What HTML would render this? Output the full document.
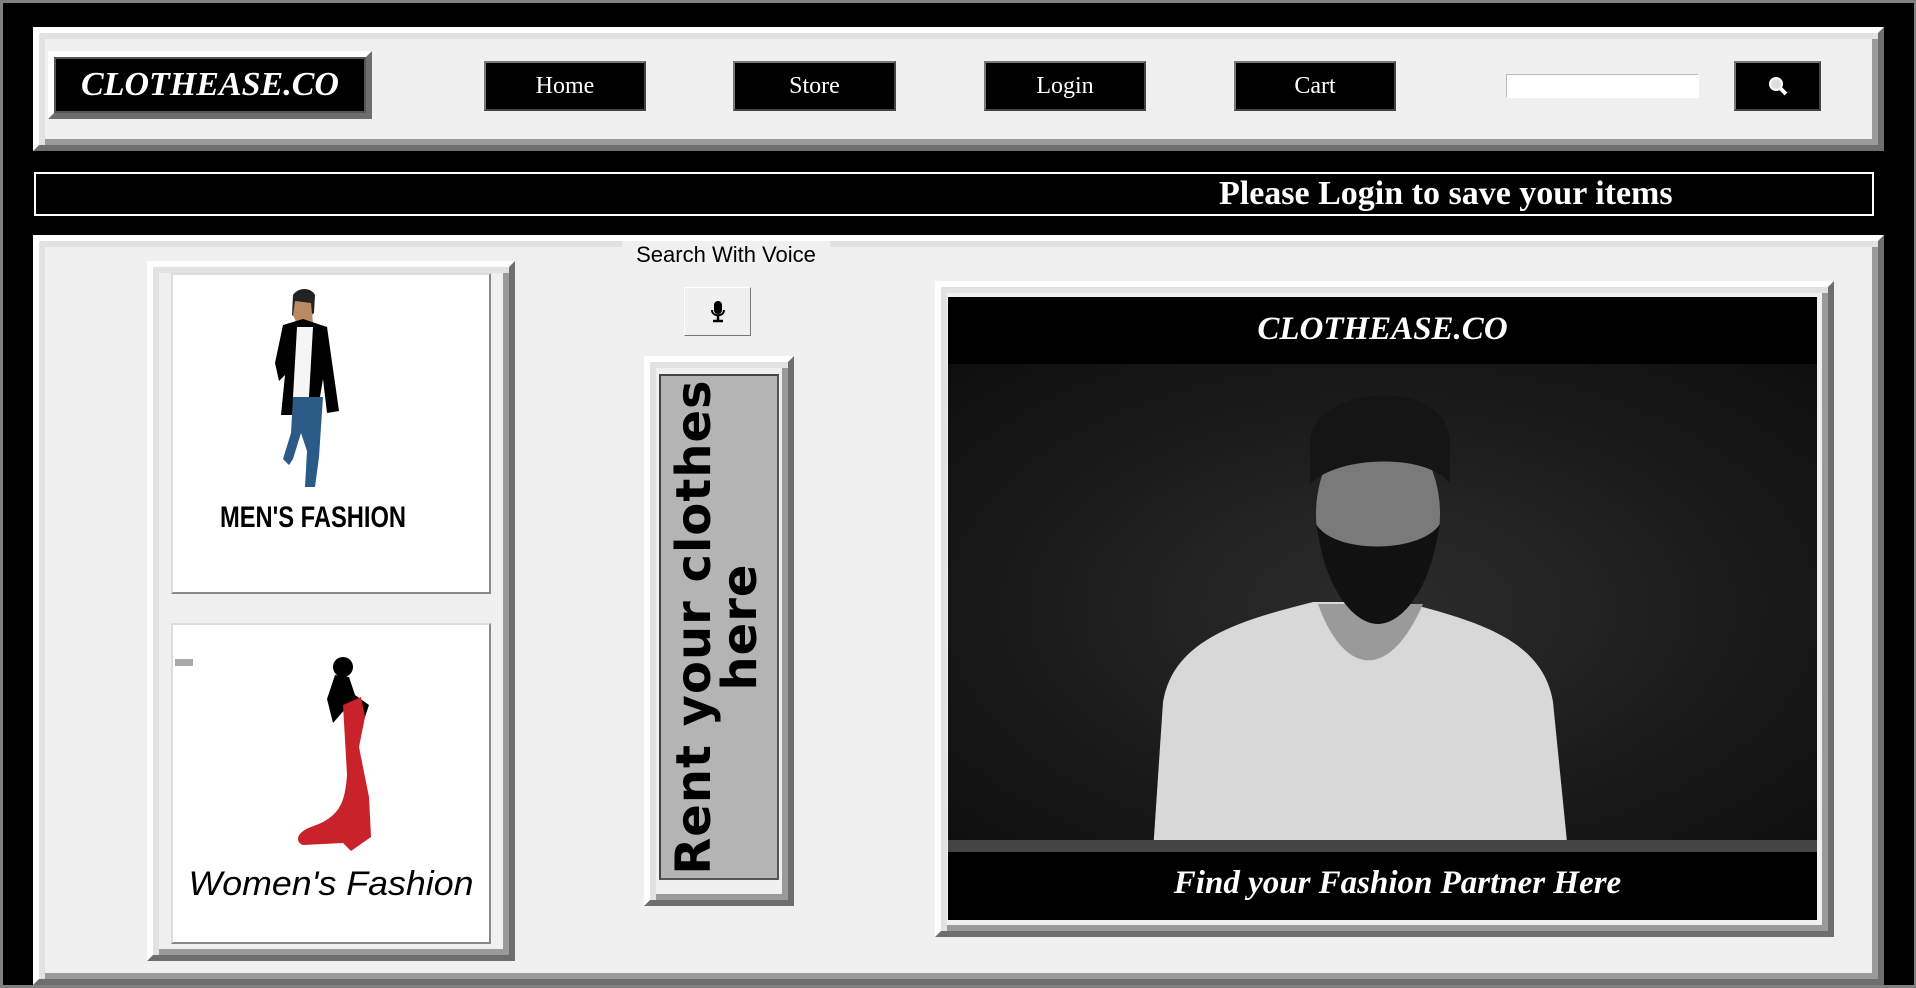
<!DOCTYPE html>
<html><head><meta charset="utf-8"><style>
*{box-sizing:border-box;margin:0;padding:0}
body{width:1916px;height:988px;background:#000;position:relative;overflow:hidden;font-family:"Liberation Serif",serif}
.frame{position:absolute;left:0;top:0;width:1916px;height:988px;border:3px solid #808080;border-right-width:2px}
.ab{position:absolute}
.ridge{position:absolute;background:#f0f0f0;border:6px solid;border-color:#fff #6e6e6e #6e6e6e #fff;box-shadow:inset 6px 6px 0 #e2e2e2,inset -6px -6px 0 #9a9a9a}
.btn{position:absolute;background:#000;color:#fff;border:2px solid;border-color:#777 #444 #444 #777;font-size:24px;display:flex;align-items:center;justify-content:center}
</style></head><body>
<div class="frame"></div>

<div class="ridge" style="left:33px;top:27px;width:1851px;height:124px"></div>
<div class="ab" style="left:48px;top:51px;width:324px;height:68px;border:6px solid;border-color:#fff #6e6e6e #6e6e6e #fff;background:#000;box-shadow:inset 0 0 0 2px #555"></div>
<div class="ab" style="left:48px;top:51px;width:324px;height:68px;color:#fff;font-style:italic;font-weight:bold;font-size:34px;display:flex;align-items:center;justify-content:center">CLOTHEASE.CO</div>
<div class="btn" style="left:484px;top:61px;width:162px;height:50px">Home</div>
<div class="btn" style="left:733px;top:61px;width:163px;height:50px">Store</div>
<div class="btn" style="left:984px;top:61px;width:162px;height:50px">Login</div>
<div class="btn" style="left:1234px;top:61px;width:162px;height:50px">Cart</div>
<div class="ab" style="left:1506px;top:74px;width:193px;height:24px;background:#fff;border:1px solid #bbb;border-right-color:#fff;border-bottom-color:#fff"></div>
<div class="btn" style="left:1734px;top:61px;width:87px;height:50px"><svg width="22" height="22" viewBox="0 0 22 22"><circle cx="9" cy="9" r="6" fill="#ddd" stroke="#fff" stroke-width="2"/><path d="M13 13l6 6" stroke="#fff" stroke-width="4"/></svg></div>

<div class="ab" style="left:34px;top:172px;width:1840px;height:44px;border:2px solid #fff;background:#000;color:#fff;font-weight:bold;font-size:34px;line-height:40px;padding-left:1183px;white-space:nowrap">Please Login to save your items</div>

<div class="ridge" style="left:33px;top:235px;width:1851px;height:750px"></div>

<div class="ridge" style="left:147px;top:261px;width:368px;height:700px"></div>
<div class="ab" style="left:171px;top:273px;width:320px;height:321px;background:#fff;border:2px solid;border-color:#ddd #888 #888 #ddd">
<svg width="316" height="317" viewBox="0 0 316 317">
<path d="M120 20c5-8 18-8 22 0l-1 18-12 10-10-8z" fill="#222"/>
<path d="M122 26l16 2 2 20-14 6-6-14z" fill="#b98a64"/>
<path d="M110 50l20-6 24 8 8 56 4 28-12 2-4-34-6 36h-36l4-40-6 6-4-18z" fill="#000"/>
<path d="M124 52h16l-4 70h-16z" fill="#f4f6f4"/>
<path d="M120 122h30l-4 60-4 30-10 0 2-36-6-18-8 26-4 6-6-6 8-26z" fill="#2b5a86"/>
<text x="140" y="252" text-anchor="middle" font-family="Liberation Sans" font-weight="bold" font-size="30" textLength="186" lengthAdjust="spacingAndGlyphs" fill="#000">MEN'S FASHION</text>
</svg></div>

<div class="ab" style="left:171px;top:623px;width:320px;height:321px;background:#fff;border:2px solid;border-color:#ddd #888 #888 #ddd">
<svg width="316" height="317" viewBox="0 0 316 317">
<rect x="2" y="34" width="18" height="7" fill="#aaa"/>
<circle cx="170" cy="42" r="10" fill="#000"/>
<path d="M162 50l14 2 6 18 14 10-8 24-10 4 4-16-8-10-14 16-6-24z" fill="#000"/>
<path d="M170 80l18-8 4 20-6 30 10 50 2 40-20 14-8-8-40 2c-10-4-4-14 8-18 30-10 34-26 36-52z" fill="#c8232a"/>
<text x="158" y="270" text-anchor="middle" font-family="Liberation Sans" font-style="italic" font-size="34" textLength="285" lengthAdjust="spacingAndGlyphs" fill="#000">Women's Fashion</text>
</svg></div>

<div class="ab" style="left:622px;top:241px;width:208px;height:28px;background:#f0f0f0;font-family:'Liberation Sans',sans-serif;font-size:22px;text-align:center;line-height:28px;white-space:nowrap">Search With Voice</div>
<div class="ab" style="left:684px;top:287px;width:67px;height:49px;background:#f0f0f0;border:1px solid;border-color:#fff #777 #777 #fff;display:flex;align-items:center;justify-content:center"><svg width="16" height="22" viewBox="0 0 16 22"><rect x="4" y="0" width="8" height="13" rx="4" fill="#000"/><path d="M2 9c0 7 12 7 12 0" stroke="#000" stroke-width="2" fill="none"/><path d="M8 15v4M3 20h10" stroke="#000" stroke-width="2.5"/></svg></div>

<div class="ridge" style="left:644px;top:356px;width:150px;height:550px"></div>
<div class="ab" style="left:659px;top:374px;width:120px;height:506px;background:#b4b4b4;border:2px solid;border-color:#444 #555 #555 #444;overflow:hidden">
<div style="position:absolute;left:50%;top:50%;width:506px;height:120px;transform:translate(-50%,-50%) rotate(-90deg);font-family:'DejaVu Sans',sans-serif;font-weight:bold;font-size:48px;line-height:46px;text-align:center;color:#000;padding-top:12px;white-space:nowrap;letter-spacing:1px">Rent your clothes<br>here</div></div>

<div class="ridge" style="left:935px;top:281px;width:899px;height:656px"></div>
<div class="ab" style="left:948px;top:297px;width:869px;height:623px;background:#000;overflow:hidden">
<div class="ab" style="left:0;top:67px;width:869px;height:488px;background:radial-gradient(ellipse at 50% 50%,#2c2c2c 0%,#1a1a1a 60%,#0e0e0e 100%)">
<svg width="869" height="488" viewBox="0 0 869 488">
<path d="M205 488l10-150c10-60 70-80 150-100h90c80 20 140 40 150 100l15 150z" fill="#d8d8d8"/>
<path d="M370 240c25 70 70 80 105 0z" fill="#9a9a9a"/>
<ellipse cx="430" cy="150" rx="62" ry="90" fill="#7a7a7a"/>
<path d="M362 80c0-60 140-70 140 0v40c-20-30-110-30-140 0z" fill="#151515"/>
<path d="M368 160c10 70 40 100 62 100s52-30 62-100c-20 30-106 30-124 0z" fill="#111"/>
<rect x="0" y="476" width="869" height="12" fill="#444"/>
</svg></div>
<div class="ab" style="left:0;top:0;width:869px;height:67px;color:#fff;font-style:italic;font-weight:bold;font-size:33px;text-align:center;line-height:65px">CLOTHEASE.CO</div>
<div class="ab" style="left:0;top:555px;width:869px;height:68px;color:#fff;font-style:italic;font-weight:bold;font-size:33px;text-align:center;line-height:62px;padding-left:30px">Find your Fashion Partner Here</div>
</div>
</body></html>
